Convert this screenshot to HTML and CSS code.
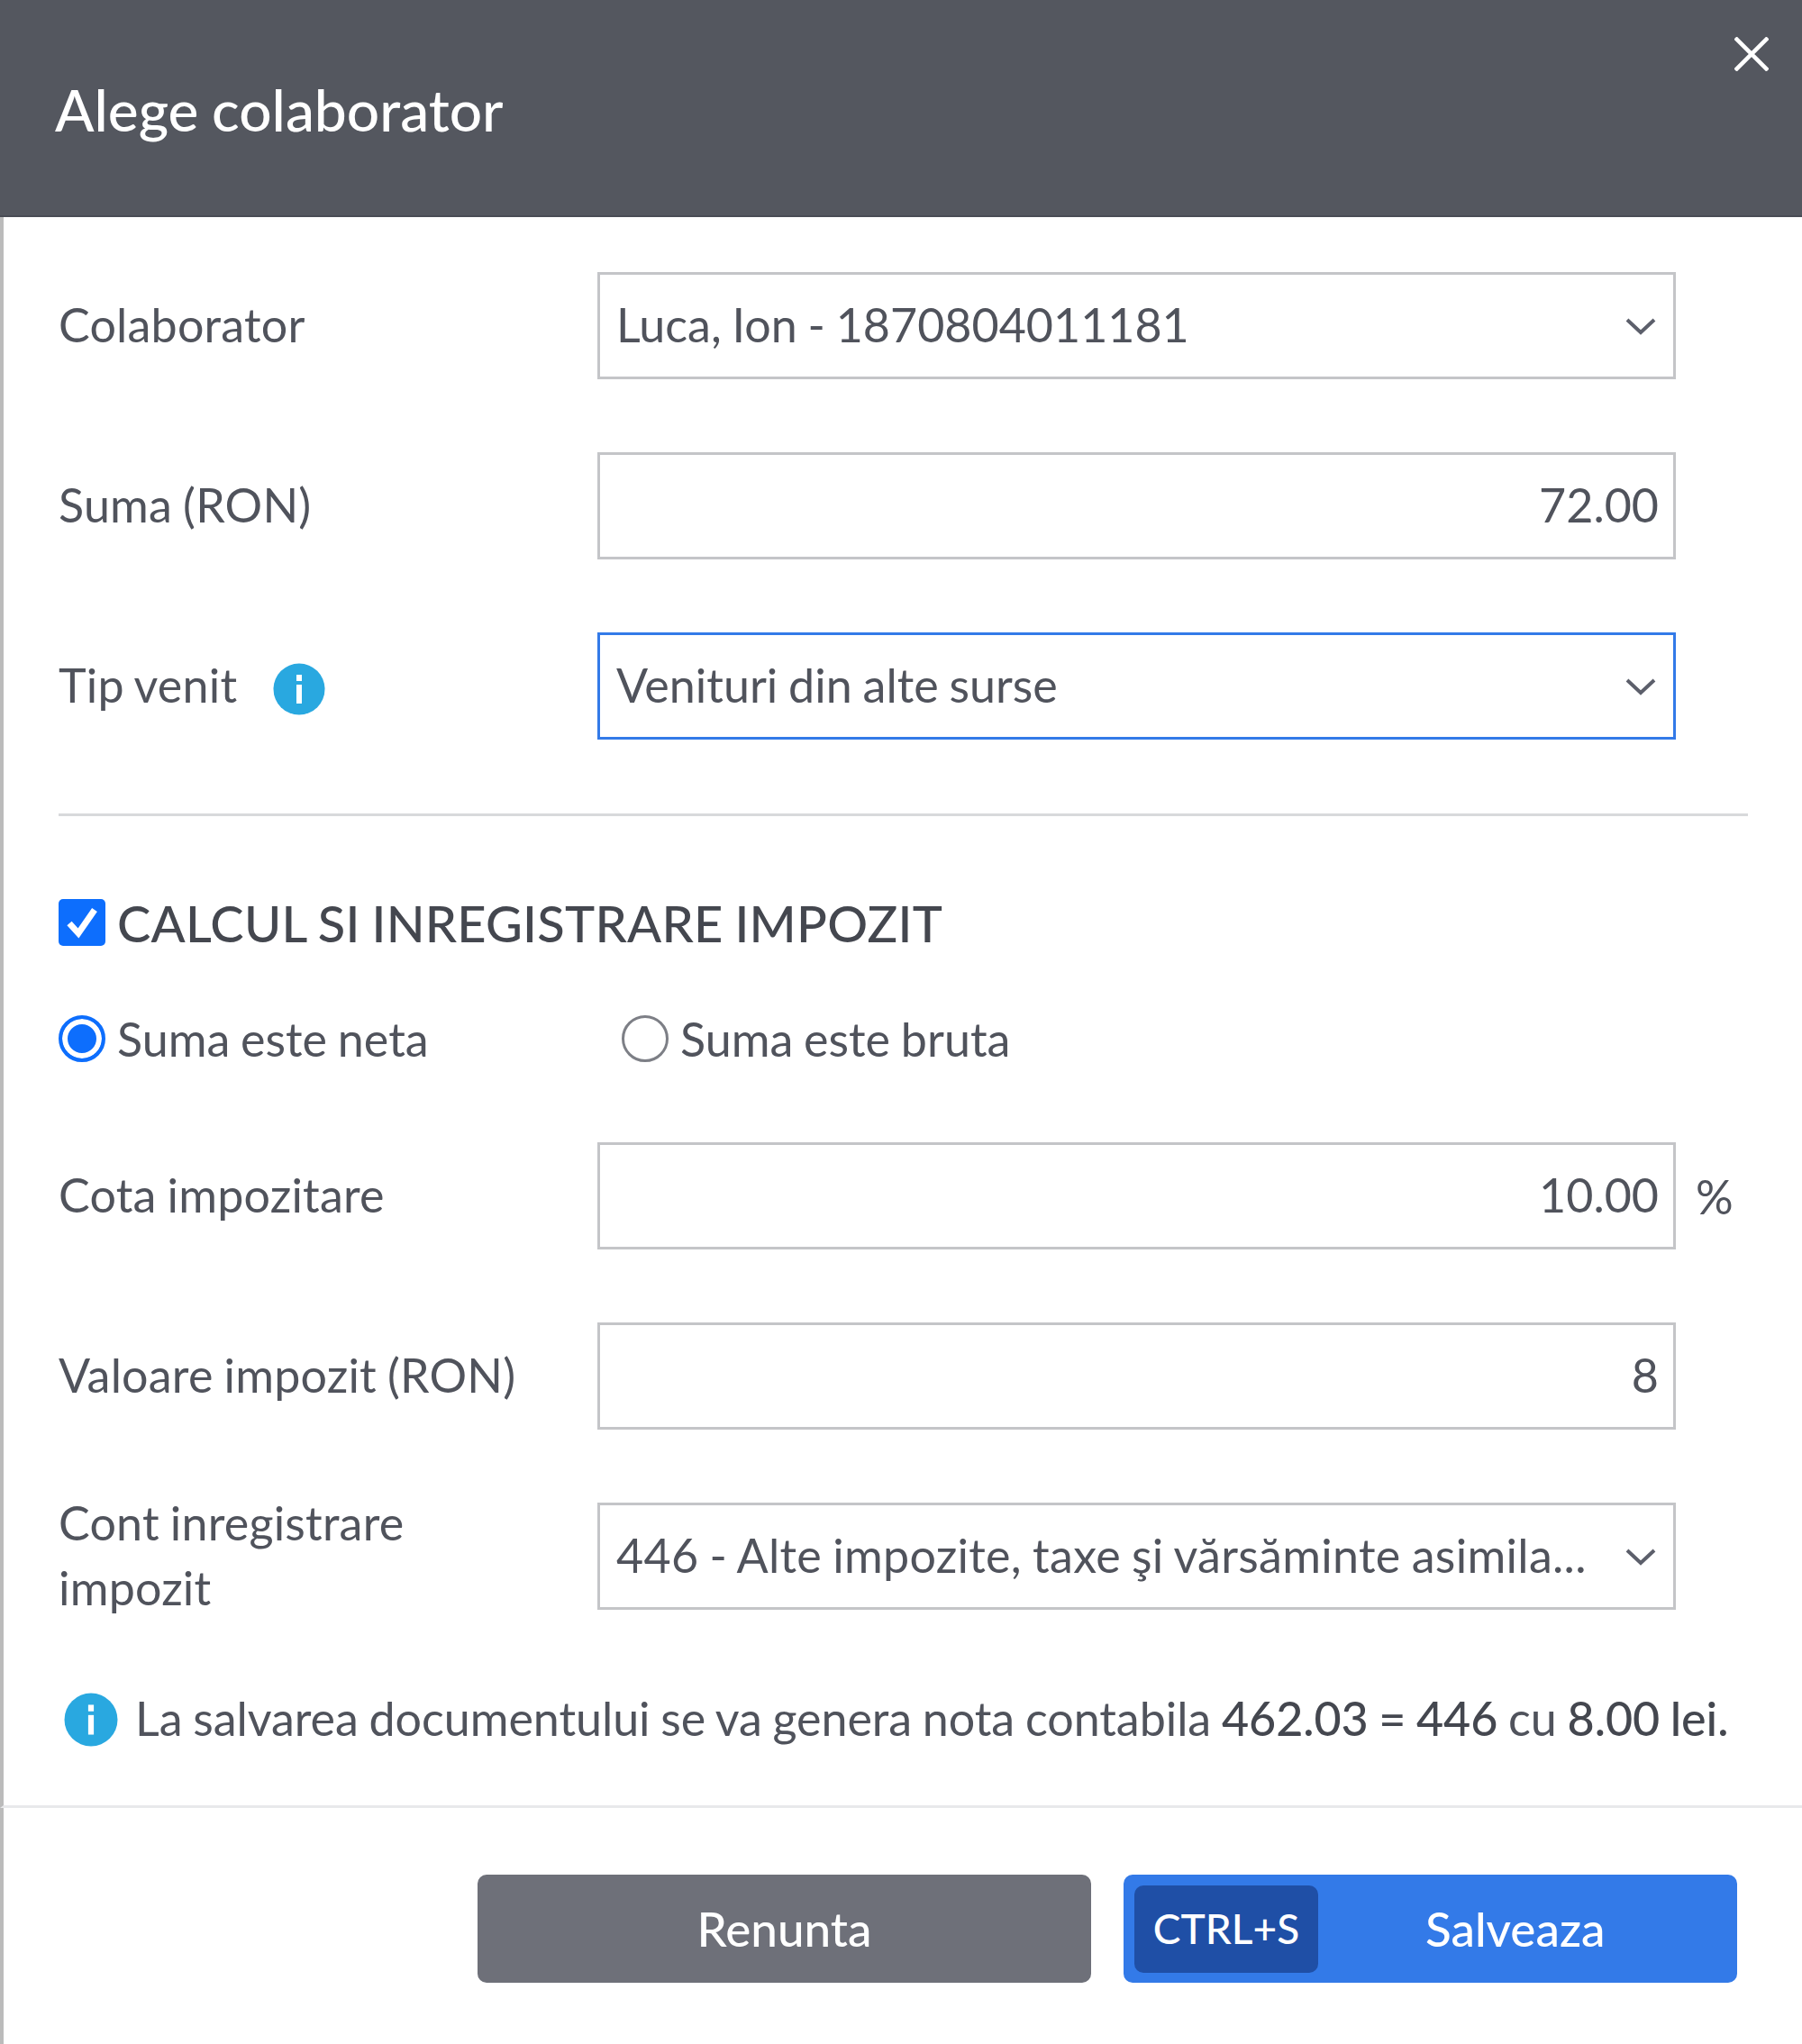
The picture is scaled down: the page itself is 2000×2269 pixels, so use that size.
FILE: index.html
```html
<!DOCTYPE html>
<html lang="ro">
<head>
  <meta charset="UTF-8">
  <title>Alege colaborator</title>
  <link rel="stylesheet" href="styles.css">
</head>
<body>
  <div class="modal">
    <div class="modal-header">
      <h1>Alege colaborator</h1>
      <button class="close" aria-label="Inchide">
        <svg width="38" height="38" viewBox="0 0 38 38"><path d="M1 1L37 37M37 1L1 37" stroke="#fff" stroke-width="4.5" fill="none"/></svg>
      </button>
    </div>
    <div class="modal-body">
      <div class="row">
        <label class="label">Colaborator</label>
        <div class="field select">
          <span class="value">Luca, Ion - 1870804011181</span>
          <svg class="chevron" width="34" height="20" viewBox="0 0 34 20"><path d="M2 3L17 17L32 3" stroke="#5c5f6b" stroke-width="4" fill="none"/></svg>
        </div>
      </div>
      <div class="row">
        <label class="label">Suma (RON)</label>
        <div class="field number">72.00</div>
      </div>
      <div class="row">
        <label class="label">Tip venit
          <svg class="info info-label" width="58" height="58" viewBox="0 0 58 58"><circle cx="29" cy="29" r="28.5" fill="#29a8e0"/><rect x="26" y="13" width="6" height="7" fill="#fff"/><rect x="26" y="24" width="6" height="21" fill="#fff"/></svg>
        </label>
        <div class="field select focused">
          <span class="value">Venituri din alte surse</span>
          <svg class="chevron" width="34" height="20" viewBox="0 0 34 20"><path d="M2 3L17 17L32 3" stroke="#5c5f6b" stroke-width="4" fill="none"/></svg>
        </div>
      </div>
      <hr class="divider">
      <div class="check-row">
        <span class="checkbox">
          <svg width="52" height="52" viewBox="0 0 52 52"><path d="M12 27L22 38L40 12" stroke="#fff" stroke-width="7" fill="none"/></svg>
        </span>
        <span class="check-label">CALCUL SI INREGISTRARE IMPOZIT</span>
      </div>
      <div class="radio-row">
        <div class="radio-item first">
          <span class="radio checked"></span>
          <span>Suma este neta</span>
        </div>
        <div class="radio-item">
          <span class="radio"></span>
          <span>Suma este bruta</span>
        </div>
      </div>
      <div class="row">
        <label class="label">Cota impozitare</label>
        <div class="field number">10.00</div>
        <span class="unit">%</span>
      </div>
      <div class="row">
        <label class="label">Valoare impozit (RON)</label>
        <div class="field number">8</div>
      </div>
      <div class="row">
        <label class="label two-line">Cont inregistrare impozit</label>
        <div class="field select">
          <span class="value value-long">446 - Alte impozite, taxe şi vărsăminte asimila...</span>
          <svg class="chevron" width="34" height="20" viewBox="0 0 34 20"><path d="M2 3L17 17L32 3" stroke="#5c5f6b" stroke-width="4" fill="none"/></svg>
        </div>
      </div>
      <div class="note">
        <svg class="info" width="60" height="60" viewBox="0 0 58 58"><circle cx="29" cy="29" r="28.5" fill="#29a8e0"/><rect x="26" y="13" width="6" height="7" fill="#fff"/><rect x="26" y="24" width="6" height="21" fill="#fff"/></svg>
        <p>La salvarea documentului se va genera nota contabila <b>462.03 = 446</b> cu <b>8.00 lei.</b></p>
      </div>
    </div>
    <div class="modal-footer">
      <button class="btn btn-cancel">Renunta</button>
      <button class="btn btn-save">
        <span class="shortcut">CTRL+S</span>
        <span class="btn-text">Salveaza</span>
      </button>
    </div>
  </div>
</body>
</html>
```

FILE: styles.css
```css
* {
  box-sizing: border-box;
}
body {
  margin: 0;
  background: #fff;
  font-family: Lato, sans-serif;
  font-size: 52px;
  word-spacing: -1.5px;
  color: #50535c;
}
.modal {
  width: 2000px;
  height: 2269px;
  background: #fff;
}
.modal-header {
  height: 241px;
  background: #54575f;
  border-bottom: 2px solid #494c55;
  display: flex;
  justify-content: space-between;
  padding: 0 37px 0 61px;
}
.modal-header h1 {
  margin: 0;
  padding-top: 89px;
  font-size: 64px;
  line-height: 66px;
  font-weight: 500;
  color: #fff;
}
.close {
  border: none;
  background: none;
  padding: 0;
  margin-top: 41px;
  height: 38px;
}
.modal-body {
  border-left: 4px solid #bbb;
  padding: 61px 60px 0 61px;
  height: 1766px;
  border-bottom: 3px solid #e8e9eb;
}
.row {
  display: flex;
  align-items: center;
  height: 119px;
  margin-bottom: 81px;
}
.label {
  width: 598px;
  flex: none;
  display: flex;
  align-items: center;
  padding-bottom: 3px;
  letter-spacing: 0.2px;
}
.two-line {
  padding-right: 150px;
  line-height: 72px;
}
.info-label {
  margin-left: 40px;
  position: relative;
  top: 5px;
}
.field {
  width: 1197px;
  height: 119px;
  flex: none;
  border: 3px solid #c4c5c8;
  background: #fff;
  padding: 0 16px 3px 18px;
  display: flex;
  align-items: center;
}
.number {
  justify-content: flex-end;
}
.select {
  justify-content: space-between;
}
.value {
  white-space: nowrap;
}
.value-long {
  letter-spacing: 0.3px;
}
.focused {
  border-color: #337ae8;
}
.chevron {
  margin-right: 3px;
  margin-top: 3px;
}
.unit {
  margin-left: 22px;
}
.divider {
  margin: 82px 0 0;
  border: none;
  border-top: 3px solid #d8d9db;
}
.check-row {
  display: flex;
  align-items: center;
  margin-top: 92px;
  height: 52px;
}
.checkbox {
  width: 52px;
  height: 52px;
  background: #0d6efd;
  border-radius: 5px;
  display: block;
}
.checkbox svg {
  display: block;
}
.check-label {
  margin-left: 13px;
  font-size: 56px;
  font-weight: 500;
  letter-spacing: 0.25px;
  color: #44474f;
}
.radio-row {
  display: flex;
  align-items: center;
  margin-top: 77px;
  margin-bottom: 89px;
  height: 52px;
}
.radio-item {
  display: flex;
  align-items: center;
  gap: 13px;
}
.first {
  width: 625px;
}
.radio {
  width: 52px;
  height: 52px;
  border-radius: 50%;
  border: 3px solid #7d7f86;
  background: #fff;
}
.radio.checked {
  border: 4px solid #0d6efd;
  box-shadow: inset 0 0 0 6px #fff;
  background: #0d6efd;
}
.note {
  display: flex;
  align-items: center;
  margin-left: 6px;
  margin-top: 89px;
  gap: 19px;
}
.note p {
  margin: 0;
  padding-bottom: 4px;
  white-space: nowrap;
  letter-spacing: -0.05px;
}
.note b {
  font-weight: 500;
  color: #44474f;
}
.modal-footer {
  border-left: 4px solid #bbb;
  height: 262px;
  display: flex;
  gap: 36px;
  justify-content: flex-end;
  padding: 74px 72px 0 0;
}
.btn {
  width: 681px;
  height: 120px;
  border: none;
  border-radius: 10px;
  color: #fff;
  font-family: Lato, sans-serif;
  font-size: 53px;
  font-weight: 500;
  display: flex;
  align-items: center;
  justify-content: center;
  padding: 0 0 2px;
}
.btn-cancel {
  background: #6e7079;
}
.btn-save {
  background: #337ae8;
  justify-content: flex-start;
  padding: 0 0 0 12px;
}
.shortcut {
  width: 204px;
  height: 97px;
  background: #1f4fa6;
  border-radius: 10px;
  font-size: 46px;
  padding-bottom: 2px;
  display: flex;
  align-items: center;
  justify-content: center;
}
.btn-text {
  margin-left: 119px;
  padding-bottom: 2px;
}
```
